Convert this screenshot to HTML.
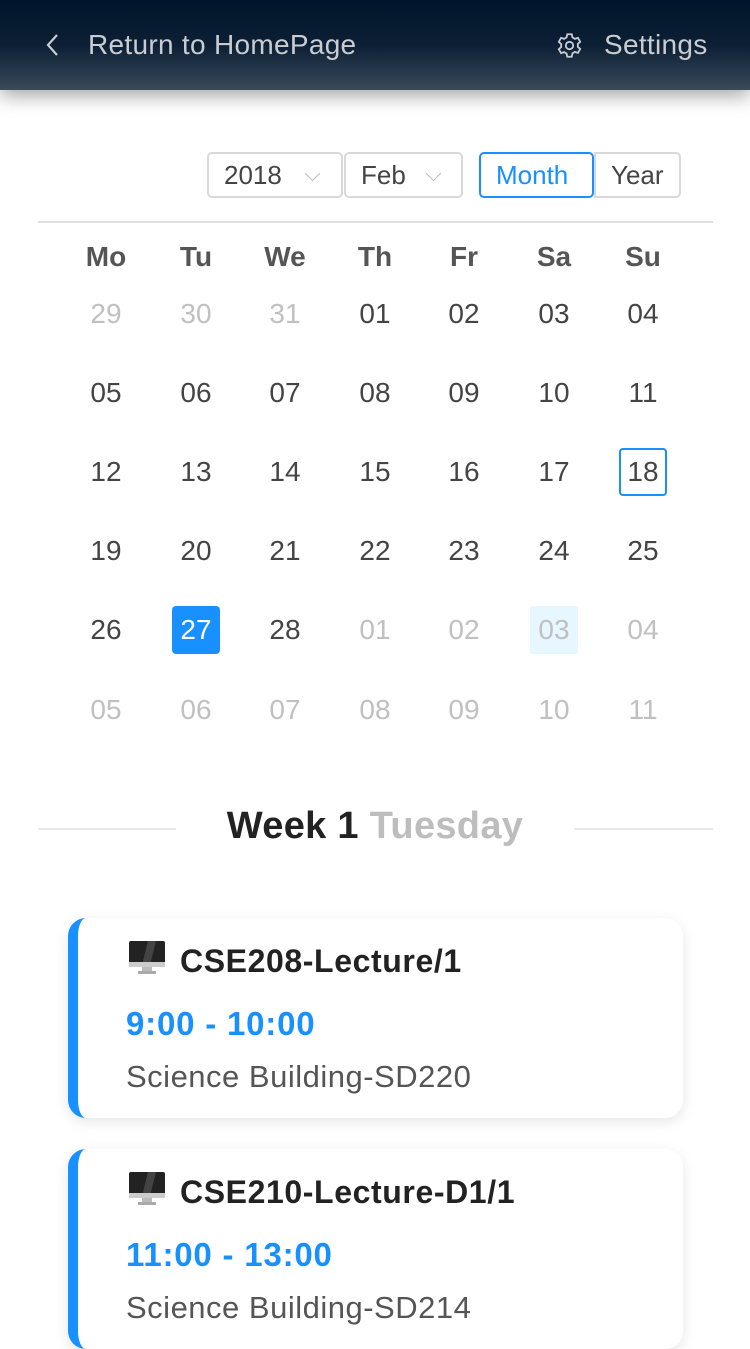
<!DOCTYPE html>
<html><head><meta charset="utf-8"><style>
*{margin:0;padding:0;box-sizing:border-box}
body{width:750px;height:1334px;overflow:hidden;background:#fff;font-family:"Liberation Sans",sans-serif;position:relative}
.hdr{position:absolute;left:0;top:0;width:750px;height:90px;background:linear-gradient(#00152b 0%,#0c1f35 50%,#3a4a5a 100%);box-shadow:0 6px 18px rgba(0,0,0,.35);color:#c9ccd1;font-size:28px;letter-spacing:.3px}
.hdr .l{position:absolute;left:88px;top:29px}
.hdr .r{position:absolute;left:604px;top:29px}
.ctl{position:absolute;top:152px;height:46px;border:2px solid #d9d9d9;border-radius:5px;font-size:26px;color:#444;line-height:42px;padding-left:15px}
.chev{position:absolute;top:14px;width:11px;height:11px;border-right:1.5px solid #bbb;border-bottom:1.5px solid #bbb;transform:rotate(45deg)}
.cell{position:absolute;width:90px;text-align:center;font-size:28px;color:#444;line-height:48px;height:48px}
.g{color:#c0c0c0}
.hd{font-weight:bold;color:#555}
.card{position:absolute;left:68px;width:615px;height:200px;background:#fff;border-left:10px solid #1890ff;border-radius:18px;box-shadow:0 4px 14px rgba(0,0,0,.1)}
.card .t{position:absolute;left:50px;top:22px;font-size:32px;font-weight:bold;color:#222;letter-spacing:.6px}
.card .tm{position:absolute;left:48px;top:87px;font-size:33px;font-weight:bold;color:#1890ff;letter-spacing:.8px}
.card .lc{position:absolute;left:48px;top:141px;font-size:31px;color:#555;letter-spacing:.5px}
.mon{display:inline-block;width:38px;height:36px;vertical-align:-4px;margin-right:14px;position:relative}
</style></head><body>
<div class="hdr">
<svg style="position:absolute;left:44px;top:33px" width="16" height="24" viewBox="0 0 16 24"><path d="M13 2L4 12l9 10" fill="none" stroke="#c9ccd1" stroke-width="2.2"/></svg>
<div class="l">Return to HomePage</div>
<svg style="position:absolute;left:556px;top:32px" width="27" height="27" viewBox="0 0 24 24" fill="none" stroke="#c9ccd1" stroke-width="1.6"><circle cx="12" cy="12" r="3.3"/><path d="M10 2h4l.6 2.8 2.2 1.3 2.7-.9 2 3.5-2.1 1.9v2.6l2.1 1.9-2 3.5-2.7-.9-2.2 1.3L14 22h-4l-.6-2.8-2.2-1.3-2.7.9-2-3.5 2.1-1.9v-2.6L2.5 8.7l2-3.5 2.7.9 2.2-1.3z"/></svg>
<div class="r">Settings</div>
</div>
<div class="ctl" style="left:207px;width:136px">2018<span class="chev" style="left:98px"></span></div>
<div class="ctl" style="left:344px;width:119px">Feb<span class="chev" style="left:82px"></span></div>
<div class="ctl" style="left:594px;width:87px;border-radius:0 5px 5px 0">Year</div>
<div class="ctl" style="left:479px;width:115px;border-color:#1890ff;color:#1890ff">Month</div>
<div style="position:absolute;left:38px;top:221px;width:675px;height:2px;background:#e0e0e0"></div>
<div id="cal"></div>
<div style="position:absolute;left:38px;top:828px;width:138px;height:2px;background:#e8e8e8"></div>
<div style="position:absolute;left:574px;top:828px;width:139px;height:2px;background:#e8e8e8"></div>
<div style="position:absolute;left:0;width:750px;top:805px;text-align:center;font-size:38px;font-weight:bold;color:#222;letter-spacing:.3px">Week 1 <span style="color:#bdbdbd">Tuesday</span></div>
<div class="card" style="top:918px"><div class="t"><span class="mon"><svg width="38" height="36" viewBox="0 0 38 36"><rect x="1" y="1" width="36" height="24" rx="2" fill="#222"/><path d="M20 1h8L22 25h-8z" fill="#444"/><rect x="1" y="22" width="36" height="5" fill="#ccc"/><rect x="14" y="27" width="10" height="5" fill="#bbb"/><rect x="10" y="31" width="18" height="3" fill="#aaa"/></svg></span>CSE208-Lecture/1</div><div class="tm">9:00 - 10:00</div><div class="lc">Science Building-SD220</div></div>
<div class="card" style="top:1149px"><div class="t"><span class="mon"><svg width="38" height="36" viewBox="0 0 38 36"><rect x="1" y="1" width="36" height="24" rx="2" fill="#222"/><path d="M20 1h8L22 25h-8z" fill="#444"/><rect x="1" y="22" width="36" height="5" fill="#ccc"/><rect x="14" y="27" width="10" height="5" fill="#bbb"/><rect x="10" y="31" width="18" height="3" fill="#aaa"/></svg></span>CSE210-Lecture-D1/1</div><div class="tm">11:00 - 13:00</div><div class="lc">Science Building-SD214</div></div>
<script>
var h=["Mo","Tu","We","Th","Fr","Sa","Su"],cx=[106,196,285,375,464,554,643],ry=[314,393,472,551,630,710];
var d=[["29","30","31","01","02","03","04"],["05","06","07","08","09","10","11"],["12","13","14","15","16","17","18"],["19","20","21","22","23","24","25"],["26","27","28","01","02","03","04"],["05","06","07","08","09","10","11"]];
var s="";
for(var i=0;i<7;i++)s+='<div class="cell hd" style="left:'+(cx[i]-45)+'px;top:233px">'+h[i]+'</div>';
for(var r=0;r<6;r++)for(var i=0;i<7;i++){var g=(r==0&&i<3)||(r==4&&i>2)||r==5;var st='left:'+(cx[i]-45)+'px;top:'+(ry[r]-24)+'px';var inner=d[r][i];
if(r==2&&i==6)inner='<span style="display:inline-block;width:48px;height:48px;border:2px solid #1890ff;border-radius:4px;line-height:44px">18</span>';
if(r==4&&i==1)inner='<span style="display:inline-block;width:48px;height:48px;background:#1890ff;color:#fff;border-radius:4px">27</span>';
if(r==4&&i==5)inner='<span style="display:inline-block;width:48px;height:48px;background:#e6f7ff;border-radius:3px">03</span>';
s+='<div class="cell'+(g?' g':'')+'" style="'+st+'">'+inner+'</div>';}
document.getElementById("cal").innerHTML=s;
</script>
</body></html>
